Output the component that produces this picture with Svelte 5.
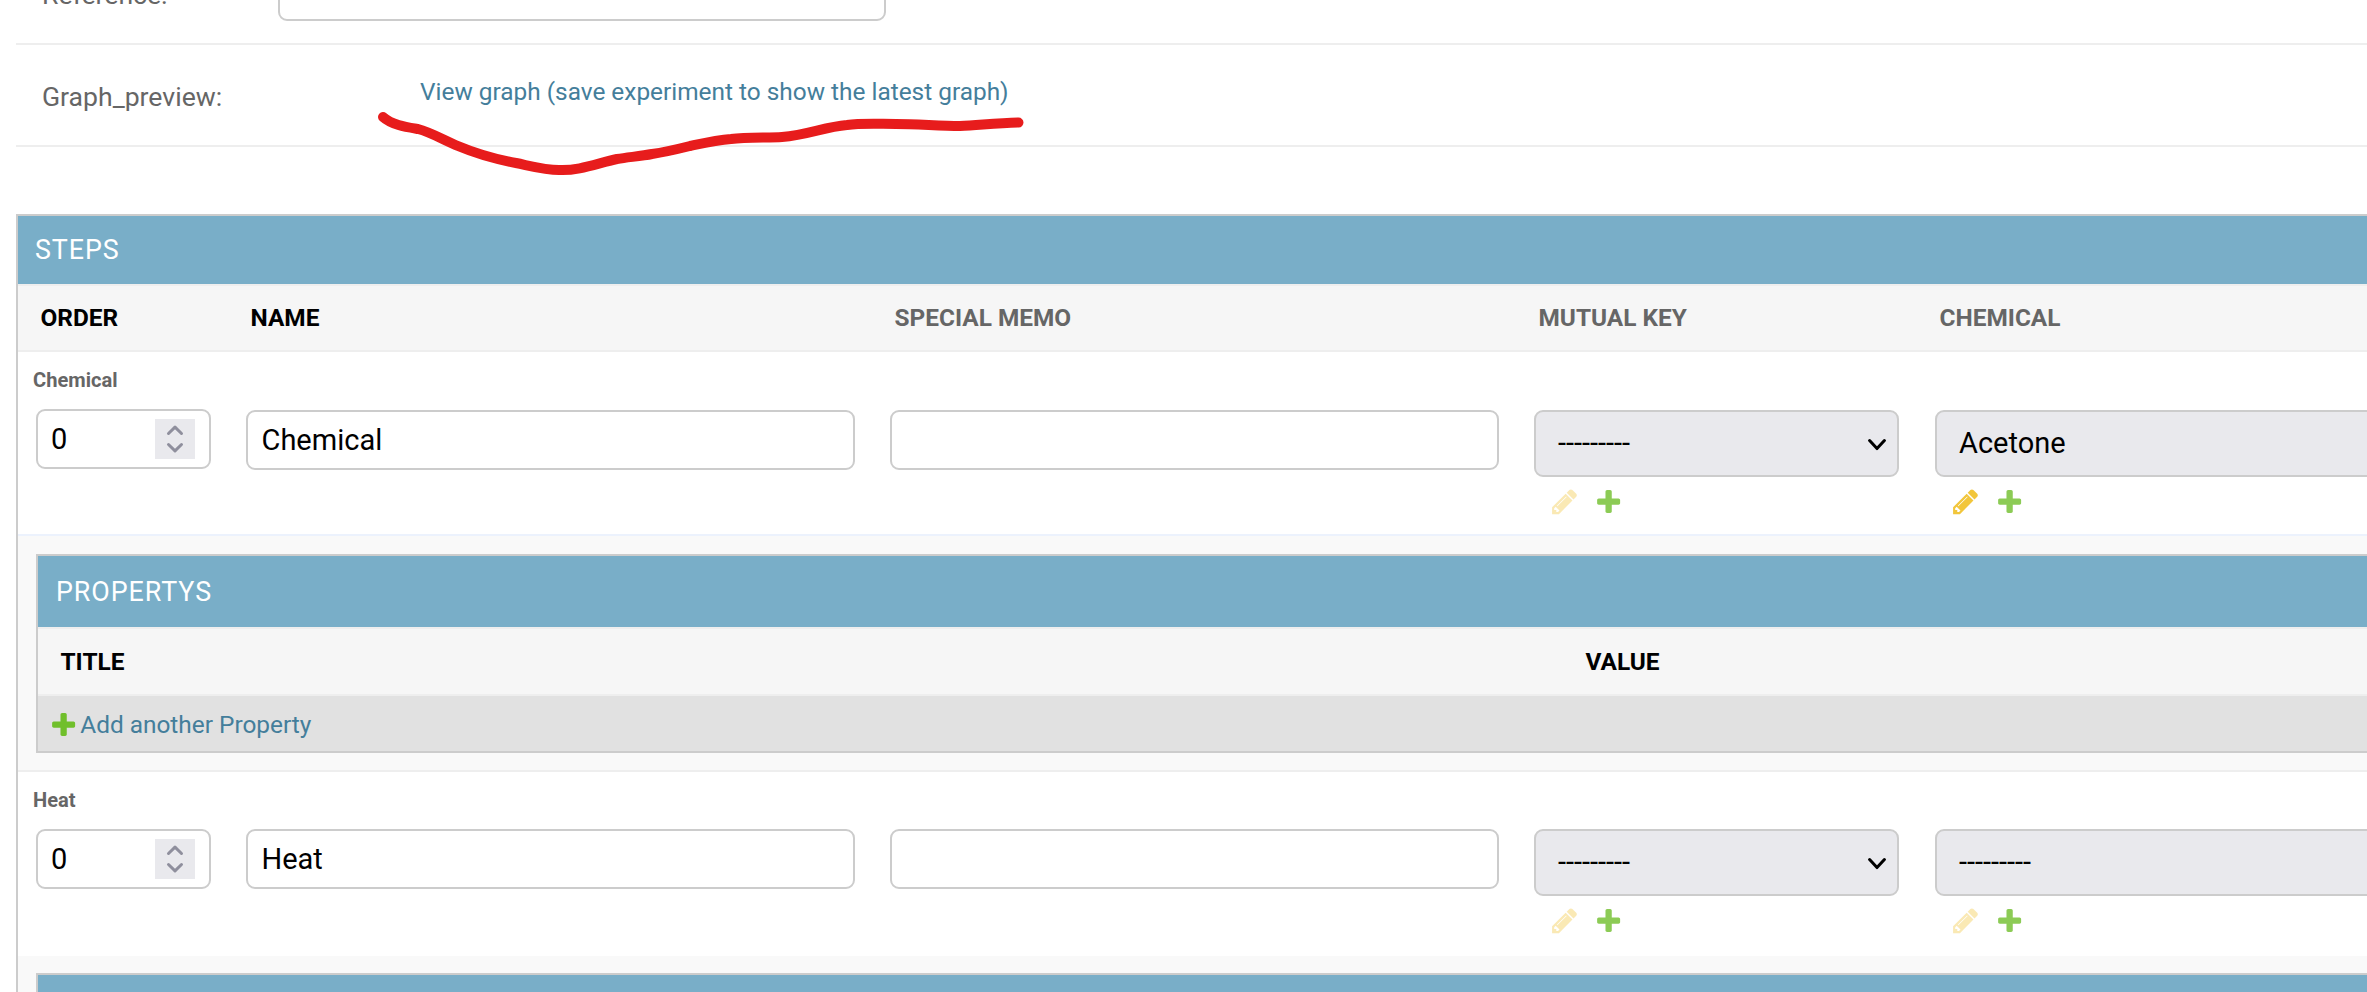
<script>
  const pencil = 'M491 1536l91-91-235-235-91 91v107h128v128h107zm523-928q0-22-22-22-10 0-17 7l-542 542q-7 7-7 17 0 22 22 22 10 0 17-7l542-542q7-7 7-17zm-54-192l416 416-832 832h-416v-416zm683 96q0 53-37 90l-166 166-416-416 166-165q36-38 90-38 53 0 91 38l235 234q37 39 37 91z';
  const plus = 'M1600 796v192q0 40-28 68t-68 28h-416v416q0 40-28 68t-68 28h-192q-40 0-68-28t-28-68v-416h-416q-40 0-68-28t-28-68v-192q0-40 28-68t68-28h416v-416q0-40 28-68t68-28h192q40 0 68 28t28 68v416h416q40 0 68 28t28 68z';
  const steps = [
    { name: 'Chemical', order: 0, mutualKey: '---------', chemical: 'Acetone', editable: true, expanded: true },
    { name: 'Heat', order: 0, mutualKey: '---------', chemical: '---------', editable: false, expanded: false }
  ];
</script>

{#snippet icon(path, kind)}
  <svg class="icon {kind}" viewBox="0 0 1792 1792"><path d={path} /></svg>
{/snippet}

{#snippet select(value, editable)}
  <div class="related">
    <div class="control select">
      <span>{value}</span>
      <svg class="chevron" viewBox="0 0 18 12"><path d="M1.6 1.6 9 9.6l7.4-8" /></svg>
    </div>
    <div class="actions">
      {@render icon(pencil, editable ? 'change' : 'change disabled')}
      {@render icon(plus, 'add')}
    </div>
  </div>
{/snippet}

<main>
  <div class="row reference">
    <span class="label">Reference:</span>
    <div class="control text"></div>
  </div>
  <div class="row preview">
    <span class="label">Graph_preview:</span>
    <a href="#graph">View graph (save experiment to show the latest graph)</a>
    <svg class="mark" viewBox="0 0 660 80">
      <path d="M13 17C22 25 36 27 48 29C60 32 74 40 88 46C107 54 130 60 146 63C165 67 176 70 189 70C209 71 228 63 247 59C260 57 272 56 282 54C296 52 308 49 320 46C334 43 347 40 361 39C377 37 400 38 412 37C438 35 454 27 477 25C491 23 509 24 526 24C548 24 569 26 590 26C610 25 627 23 648.5 22.5" />
    </svg>
  </div>

  <section class="group steps">
    <h2>STEPS</h2>
    <div class="columns head">
      <span class="required">ORDER</span>
      <span class="required">NAME</span>
      <span>SPECIAL MEMO</span>
      <span>MUTUAL KEY</span>
      <span>CHEMICAL</span>
    </div>
    {#each steps as step, i}
      <div class="step" class:later={i > 0}>
        <p class="original">{step.name}</p>
        <div class="columns fields">
          <div class="control number">
            <span>{step.order}</span>
            <svg class="spin" viewBox="0 0 40 40"><path d="M13.5 14.5 20 8.2l6.5 6.3M13.5 25.5 20 31.8l6.5-6.3" /></svg>
          </div>
          <div class="control text"><span>{step.name}</span></div>
          <div class="control text"></div>
          {@render select(step.mutualKey, false)}
          {@render select(step.chemical, step.editable)}
        </div>
      </div>
      <div class="nested" class:later={i > 0}>
        <section class="group">
          <h2>{#if step.expanded}PROPERTYS{/if}</h2>
          {#if step.expanded}
            <div class="head pair">
              <span class="required">TITLE</span>
              <span class="required">VALUE</span>
            </div>
            <div class="addrow">
              {@render icon(plus, 'solid')}
              <a href="#add">Add another Property</a>
            </div>
          {/if}
        </section>
      </div>
    {/each}
  </section>
</main>

<style>
  :global(body) { overflow: hidden; background: #fff; }
  * { box-sizing: border-box; }
  main {
    height: 992px;
    padding-left: 16px;
    overflow: hidden;
    font-family: Roboto, sans-serif;
    color: #000;
    white-space: nowrap;
  }
  a { color: #447e9b; text-decoration: none; font-size: 24.4px; line-height: 30px; }
  .row { display: flex; align-items: flex-start; border-bottom: 2px solid #eee; }
  .label { font-size: 26.6px; line-height: 32px; color: #666; padding-left: 26px; }
  .reference { height: 45px; }
  .reference .label { width: 262px; margin-top: -21px; }
  .reference .control { width: 608px; margin-top: -39px; }
  .preview { position: relative; height: 102px; }
  .preview .label { width: 404px; margin-top: 36px; }
  .preview a { margin-top: 32px; }
  .mark { position: absolute; left: 354px; top: 55px; width: 660px; height: 80px; }
  .mark path { fill: none; stroke: #e71c1c; stroke-width: 10; stroke-linecap: round; stroke-linejoin: round; }

  .group { border: 2px solid #ccc; border-right: 0; }
  .steps { margin-top: 67px; }
  h2 {
    margin: 0;
    height: 68px;
    padding-left: 17px;
    background: #79aec8;
    color: #fff;
    font-size: 26.8px;
    line-height: 68px;
    font-weight: 400;
    letter-spacing: 0.95px;
  }
  .columns { display: grid; grid-template-columns: 210px 644px 644px 401px 620px; }
  .head {
    height: 68px;
    background: #f6f6f6;
    border-top: 2px solid #eee;
    border-bottom: 2px solid #eee;
    color: #666;
    font-size: 24.4px;
    font-weight: 700;
    line-height: 64px;
  }
  .head span { padding-left: 22.5px; }
  .head .required { color: #000; }

  .step { height: 184px; border-bottom: 2px solid #ecf2fd; background: #fff; overflow: hidden; }
  .step.later { border-bottom-color: #fff; }
  .original { margin: 15px 0 1px 15px; font-size: 20.1px; line-height: 26px; font-weight: 700; color: #666; }
  .fields { padding-top: 16px; align-items: start; }
  .fields > :global(*) { margin-left: 18px; }
  .control { display: flex; align-items: center; height: 60px; border: 2px solid #ccc; border-radius: 9px; font-size: 29px; line-height: 36px; background: #fff; }
  .number { width: 175px; margin-top: -1px; padding: 0 14px 0 13px; justify-content: space-between; }
  .number span { margin-top: -1px; }
  .spin { width: 40px; height: 40px; background: #e9e9ed; }
  .spin path { fill: none; stroke: #8f8f9d; stroke-width: 3; stroke-linecap: round; stroke-linejoin: round; }
  .text { width: 609px; padding-left: 13.5px; }
  .later .fields { padding-top: 15px; }
  .later .number { margin-top: 0; }
  .select { height: 67px; width: 365px; padding: 0 11px 0 22px; justify-content: space-between; background: #e9e9ed; }
  .select span { margin-top: -1px; }
  .related:last-child .select { width: 600px; }
  .chevron { width: 18px; height: 12px; margin-top: 2px; }
  .chevron path { fill: none; stroke: #000; stroke-width: 3; stroke-linecap: round; stroke-linejoin: round; }
  .actions { display: flex; gap: 15px; padding: 10px 0 0 15.6px; }
  .icon { flex: none; width: 29.25px; height: 29.25px; }
  .change { fill: #efb80b; opacity: 0.8; }
  .change.disabled { opacity: 0.3; }
  .add { fill: #70bf2b; opacity: 0.8; }
  .solid { fill: #70bf2b; }

  .nested { height: 236px; padding: 18px 0 17px 18px; background: #f9f9f9; border-bottom: 2px solid #eee; }
  .nested.later { padding-top: 17px; }
  .nested h2 { height: 71px; line-height: 72px; padding-left: 18px; }
  .pair { display: grid; grid-template-columns: 1525px 1fr; height: 69px; line-height: 65px; }
  .addrow { display: flex; align-items: center; height: 55px; padding: 2px 0 0 11px; gap: 2px; background: #e1e1e1; }
</style>
